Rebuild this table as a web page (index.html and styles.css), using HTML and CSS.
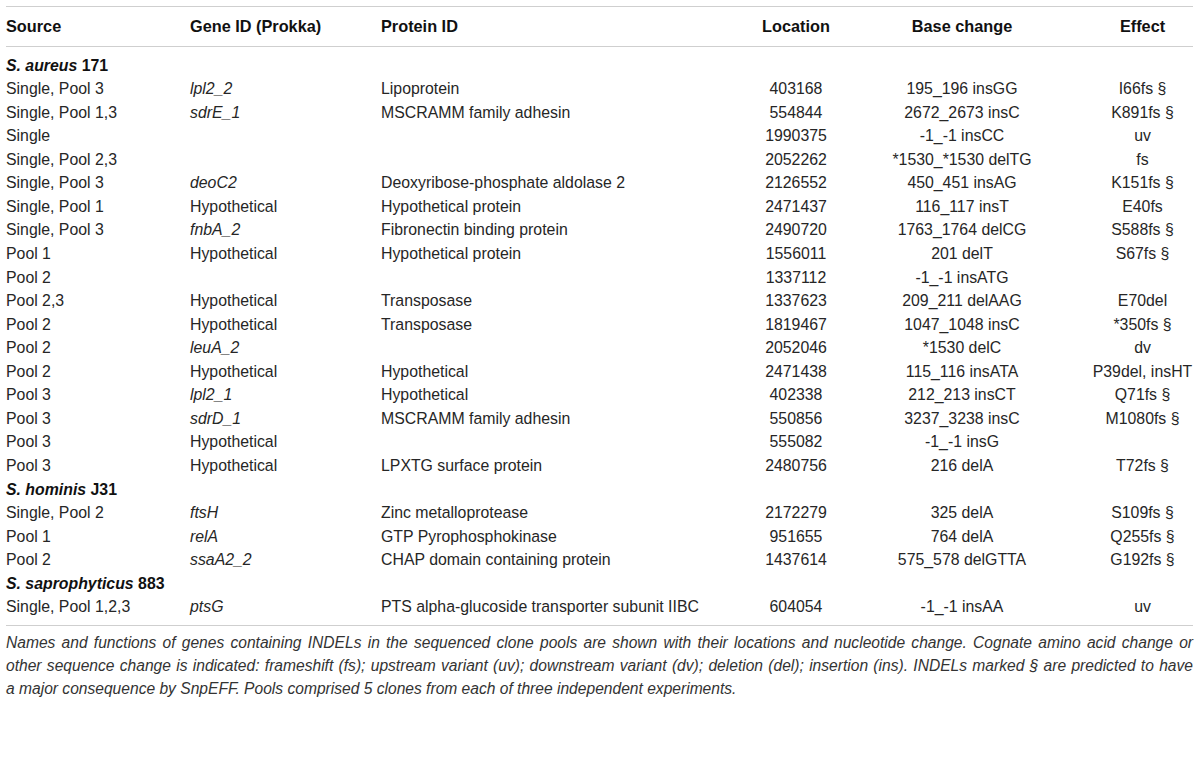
FILE: index.html
```html
<!DOCTYPE html>
<html lang="en">
<head>
<meta charset="utf-8">
<title>INDELs table</title>
<link rel="stylesheet" href="styles.css">
</head>
<body>
<div class="page">
<table class="data">
  <colgroup>
    <col class="c-src"><col class="c-gene"><col class="c-prot"><col class="c-loc"><col class="c-base"><col class="c-eff">
  </colgroup>
  <thead>
    <tr><th>Source</th><th>Gene ID (Prokka)</th><th>Protein ID</th><th class="ctr">Location</th><th class="ctr">Base change</th><th class="ctr eff">Effect</th></tr>
  </thead>
  <tbody>
    <tr class="grp first"><td colspan="6"><i>S. aureus</i> 171</td></tr>
    <tr><td>Single, Pool 3</td><td><i>lpl2_2</i></td><td>Lipoprotein</td><td class="ctr">403168</td><td class="ctr">195_196 insGG</td><td class="ctr eff">I66fs §</td></tr>
    <tr><td>Single, Pool 1,3</td><td><i>sdrE_1</i></td><td>MSCRAMM family adhesin</td><td class="ctr">554844</td><td class="ctr">2672_2673 insC</td><td class="ctr eff">K891fs §</td></tr>
    <tr><td>Single</td><td></td><td></td><td class="ctr">1990375</td><td class="ctr">-1_-1 insCC</td><td class="ctr eff">uv</td></tr>
    <tr><td>Single, Pool 2,3</td><td></td><td></td><td class="ctr">2052262</td><td class="ctr">*1530_*1530 delTG</td><td class="ctr eff">fs</td></tr>
    <tr><td>Single, Pool 3</td><td><i>deoC2</i></td><td>Deoxyribose-phosphate aldolase 2</td><td class="ctr">2126552</td><td class="ctr">450_451 insAG</td><td class="ctr eff">K151fs §</td></tr>
    <tr><td>Single, Pool 1</td><td>Hypothetical</td><td>Hypothetical protein</td><td class="ctr">2471437</td><td class="ctr">116_117 insT</td><td class="ctr eff">E40fs</td></tr>
    <tr><td>Single, Pool 3</td><td><i>fnbA_2</i></td><td>Fibronectin binding protein</td><td class="ctr">2490720</td><td class="ctr">1763_1764 delCG</td><td class="ctr eff">S588fs §</td></tr>
    <tr><td>Pool 1</td><td>Hypothetical</td><td>Hypothetical protein</td><td class="ctr">1556011</td><td class="ctr">201 delT</td><td class="ctr eff">S67fs §</td></tr>
    <tr><td>Pool 2</td><td></td><td></td><td class="ctr">1337112</td><td class="ctr">-1_-1 insATG</td><td class="ctr eff"></td></tr>
    <tr><td>Pool 2,3</td><td>Hypothetical</td><td>Transposase</td><td class="ctr">1337623</td><td class="ctr">209_211 delAAG</td><td class="ctr eff">E70del</td></tr>
    <tr><td>Pool 2</td><td>Hypothetical</td><td>Transposase</td><td class="ctr">1819467</td><td class="ctr">1047_1048 insC</td><td class="ctr eff">*350fs §</td></tr>
    <tr><td>Pool 2</td><td><i>leuA_2</i></td><td></td><td class="ctr">2052046</td><td class="ctr">*1530 delC</td><td class="ctr eff">dv</td></tr>
    <tr><td>Pool 2</td><td>Hypothetical</td><td>Hypothetical</td><td class="ctr">2471438</td><td class="ctr">115_116 insATA</td><td class="ctr eff">P39del, insHT</td></tr>
    <tr><td>Pool 3</td><td><i>lpl2_1</i></td><td>Hypothetical</td><td class="ctr">402338</td><td class="ctr">212_213 insCT</td><td class="ctr eff">Q71fs §</td></tr>
    <tr><td>Pool 3</td><td><i>sdrD_1</i></td><td>MSCRAMM family adhesin</td><td class="ctr">550856</td><td class="ctr">3237_3238 insC</td><td class="ctr eff">M1080fs §</td></tr>
    <tr><td>Pool 3</td><td>Hypothetical</td><td></td><td class="ctr">555082</td><td class="ctr">-1_-1 insG</td><td class="ctr eff"></td></tr>
    <tr><td>Pool 3</td><td>Hypothetical</td><td>LPXTG surface protein</td><td class="ctr">2480756</td><td class="ctr">216 delA</td><td class="ctr eff">T72fs §</td></tr>
    <tr class="grp"><td colspan="6"><i>S. hominis</i> J31</td></tr>
    <tr><td>Single, Pool 2</td><td><i>ftsH</i></td><td>Zinc metalloprotease</td><td class="ctr">2172279</td><td class="ctr">325 delA</td><td class="ctr eff">S109fs §</td></tr>
    <tr><td>Pool 1</td><td><i>relA</i></td><td>GTP Pyrophosphokinase</td><td class="ctr">951655</td><td class="ctr">764 delA</td><td class="ctr eff">Q255fs §</td></tr>
    <tr><td>Pool 2</td><td><i>ssaA2_2</i></td><td>CHAP domain containing protein</td><td class="ctr">1437614</td><td class="ctr">575_578 delGTTA</td><td class="ctr eff">G192fs §</td></tr>
    <tr class="grp"><td colspan="6"><i>S. saprophyticus</i> 883</td></tr>
    <tr class="last"><td>Single, Pool 1,2,3</td><td><i>ptsG</i></td><td>PTS alpha-glucoside transporter subunit IIBC</td><td class="ctr">604054</td><td class="ctr">-1_-1 insAA</td><td class="ctr eff">uv</td></tr>
  </tbody>
</table>
<p class="caption"><span class="cap-line full">Names and functions of genes containing INDELs in the sequenced clone pools are shown with their locations and nucleotide change. Cognate amino acid change or</span> <span class="cap-line full">other sequence change is indicated: frameshift (fs); upstream variant (uv); downstream variant (dv); deletion (del); insertion (ins). INDELs marked § are predicted to have</span> <span class="cap-line">a major consequence by SnpEFF. Pools comprised 5 clones from each of three independent experiments.</span></p>
</div>
</body>
</html>
```
FILE: styles.css
```css
html, body {
  margin: 0;
  padding: 0;
  background: #ffffff;
}
body {
  font-family: "Liberation Sans", Arial, sans-serif;
  color: #262626;
}
.page {
  padding: 6px 7px 0 6px;
}
.data {
  width: 1187px;
  border-collapse: collapse;
  table-layout: fixed;
  font-size: 15.85px;
}
.c-src { width: 184px; }
.c-gene { width: 191px; }
.c-prot { width: 359px; }
.c-loc { width: 112px; }
.c-base { width: 220px; }
.c-eff { width: 121px; }
.data thead tr {
  border-top: 1px solid #cfcfcf;
  border-bottom: 1px solid #cfcfcf;
}
.data th {
  height: 39px;
  padding: 0;
  text-align: left;
  font-weight: bold;
  color: #111;
  font-size: 16.3px;
  white-space: nowrap;
}
.data td {
  height: 23.57px;
  padding: 0;
  line-height: 23.57px;
  white-space: nowrap;
  vertical-align: middle;
}
.data .ctr { text-align: center; }
.data .eff { padding-left: 20px; }
.data .grp td {
  font-weight: bold;
  color: #111;
}
.data .grp.first td {
  height: 22px;
  line-height: 22px;
  padding-top: 8px;
}
.data tr.last {
  border-bottom: 1px solid #cfcfcf;
}
.data tr.last td {
  padding-bottom: 6px;
}
.caption {
  margin: 5px 0 0 0;
  width: 1187px;
  font-size: 15.6px;
  line-height: 23px;
  font-style: italic;
  color: #333;
}
.cap-line {
  display: block;
  white-space: nowrap;
}
.cap-line.full {
  text-align: justify;
  text-align-last: justify;
}
```
